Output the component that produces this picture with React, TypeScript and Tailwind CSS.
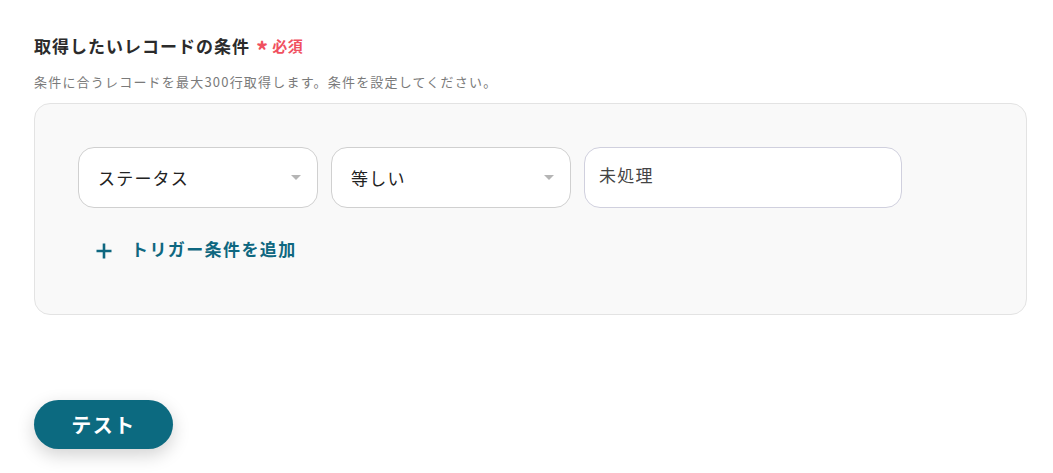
import React from "react";

const font = { fontFamily: '"Noto Sans CJK JP", "Noto Sans", sans-serif' };

const Caret = () => (
  <span className="w-0 h-0 border-l-[5px] border-r-[5px] border-t-[5px] border-l-transparent border-r-transparent border-t-[#b5b5b5]" />
);

const SelectBox = ({ label }: { label: string }) => (
  <div className="w-[240px] h-[61px] bg-white border border-[#d0d0d0] rounded-[16px] flex items-center justify-between pl-[19px] pr-[16px]">
    <span className="text-[17px] tracking-[1.2px] text-[#222]">{label}</span>
    <Caret />
  </div>
);

const App: React.FC = () => {
  return (
    <div className="w-[1053px] h-[473px] bg-white relative overflow-hidden" style={font}>
      <div className="pl-[34px] pt-[34px] pr-[26px]">
        <div className="flex items-center h-[24px]">
          <span className="text-[17px] tracking-[1px] font-bold text-[#2b2b2b]">取得したいレコードの条件</span>
          <span className="ml-[6px] text-[#f0505f] text-[24px] font-bold leading-none mt-[8px]">*</span>
          <span className="ml-[4px] text-[#f0505f] text-[15px] tracking-[0.5px] font-bold">必須</span>
        </div>
        <p className="mt-[15px] text-[13px] tracking-[1.2px] text-[#7a7a7a] leading-[18px]">
          条件に合うレコードを最大300行取得します。条件を設定してください。
        </p>
        <div className="mt-[12px] h-[212px] bg-[#f9f9f9] border border-[#e3e3e3] rounded-[16px] pl-[43px] pt-[43px]">
          <div className="flex gap-[13px]">
            <SelectBox label="ステータス" />
            <SelectBox label="等しい" />
            <div className="w-[318px] h-[61px] bg-white border border-[#d0d0de] rounded-[16px] flex items-start pt-[14px] pl-[14px]">
              <span className="text-[17px] tracking-[1.2px] text-[#444]">未処理</span>
            </div>
          </div>
          <div className="flex items-center mt-[28px] ml-[17px] text-[#0e6780]">
            <svg width="18" height="18" viewBox="0 0 18 18" className="mt-[4px]">
              <path d="M9 1.5v15M1.5 9h15" stroke="#0e6780" strokeWidth="2.6" />
            </svg>
            <span className="ml-[18px] text-[17px] tracking-[1.4px] font-bold">トリガー条件を追加</span>
          </div>
        </div>
      </div>
      <button className="absolute left-[34px] top-[400px] w-[139px] h-[49px] rounded-full bg-[#0c6a80] text-white text-[20px] tracking-[1.5px] font-bold shadow-[0_6px_18px_rgba(0,0,0,0.18)]">
        テスト
      </button>
    </div>
  );
};

export default App;
